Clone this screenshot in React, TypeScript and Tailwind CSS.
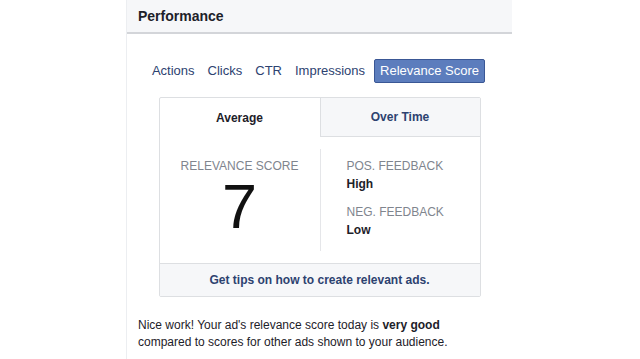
export default function App() {
  const links = ["Actions", "Clicks", "CTR", "Impressions"]

  return (
    <div className="w-full h-[359px] bg-white overflow-hidden" style={{ fontFamily: '"Liberation Sans", Arial, sans-serif' }}>
      <div className="ml-[126px] w-[386px] h-full border-l border-[#eceef1]">
        {/* Header */}
        <div className="h-[34px] bg-[#f6f7f9] border-b-2 border-[#d3d5d9] px-[11px] flex items-center">
          <h2 className="text-[14px] font-bold text-[#1d2129]">Performance</h2>
        </div>

        {/* Metric nav */}
        <div className="mt-[25px] flex justify-center items-center gap-[13px] pr-[2px]">
          {links.map((l) => (
            <span key={l} className="text-[13px] text-[#2d4270]">{l}</span>
          ))}
          <span className="ml-[-4px] h-[24px] px-[5px] flex items-center rounded-[2px] bg-[#5c7dbd] border border-[#3a5795] text-[13px] text-white">
            Relevance Score
          </span>
        </div>

        {/* Card */}
        <div className="mt-[14px] mx-auto w-[322px] border border-[#dddfe2] rounded-[2px]">
          <div className="flex h-[39px]">
            <div className="w-[160px] flex items-center justify-center text-[12px] font-bold text-[#1d2129]">Average</div>
            <div className="flex-1 flex items-center justify-center bg-[#f6f7f9] border-l border-b border-[#dddfe2] text-[12px] font-bold text-[#2d4270]">
              Over Time
            </div>
          </div>
          <div className="flex h-[126px] py-[12px]">
            <div className="w-[160px] flex flex-col items-center pt-[10px]">
              <div className="text-[12px] text-[#80858e] leading-[14px]">RELEVANCE SCORE</div>
              <div className="text-[63px] leading-[62px] text-[#111] mt-[2px]">7</div>
            </div>
            <div className="flex-1 border-l border-[#e5e6e9] pl-[26px] pt-[10px]">
              <div className="text-[12px] text-[#80858e] leading-[14px]">POS. FEEDBACK</div>
              <div className="text-[12px] font-bold text-[#1d2129] leading-[14px] mt-[4px]">High</div>
              <div className="text-[12px] text-[#80858e] leading-[14px] mt-[14px]">NEG. FEEDBACK</div>
              <div className="text-[12px] font-bold text-[#1d2129] leading-[14px] mt-[4px]">Low</div>
            </div>
          </div>
          <div className="h-[33px] bg-[#f6f7f9] border-t border-[#dddfe2] flex items-center justify-center text-[12px] font-bold text-[#2d4270]">
            Get tips on how to create relevant ads.
          </div>
        </div>

        {/* Summary */}
        <p className="mt-[20px] px-[11px] text-[12px] leading-[17px] text-[#1d2129]">
          Nice work! Your ad's relevance score today is <span className="font-bold">very good</span>
          <br />
          compared to scores for other ads shown to your audience.
        </p>
      </div>
    </div>
  )
}
